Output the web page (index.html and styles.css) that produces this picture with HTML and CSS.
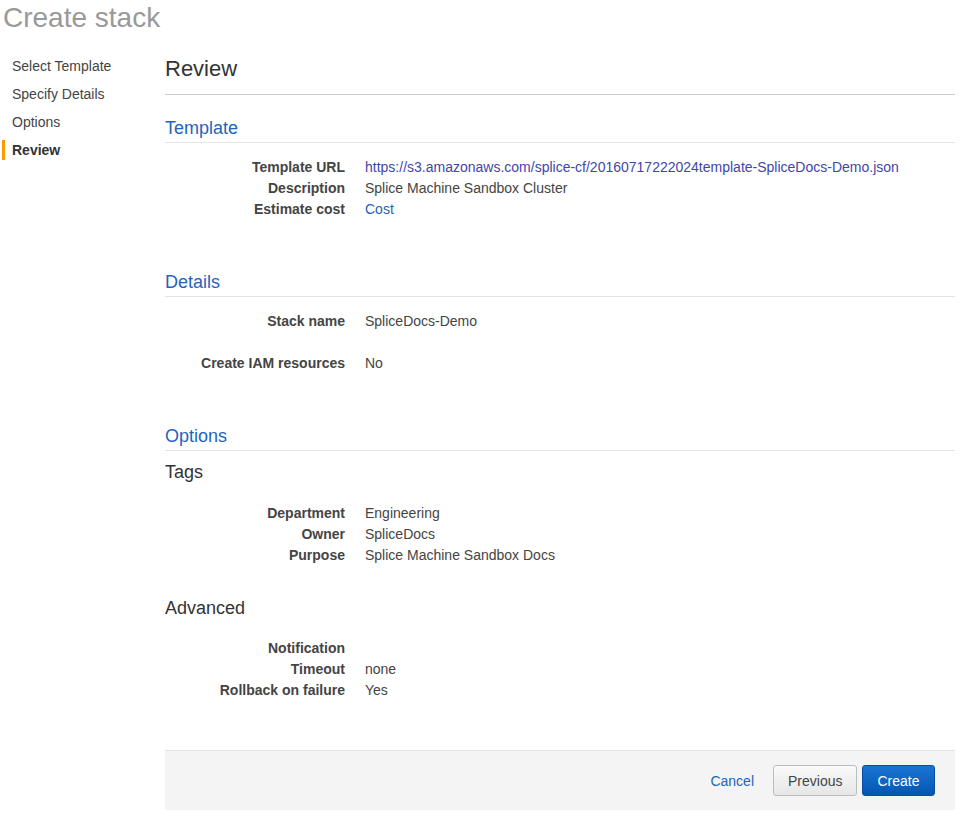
FILE: index.html
```html
<!DOCTYPE html>
<html lang="en">
<head>
<meta charset="utf-8">
<title>Create stack</title>
<link rel="stylesheet" href="styles.css">
</head>
<body>
<h1 class="page-title">Create stack</h1>
<div class="layout">
  <nav class="steps">
    <div class="step">Select Template</div>
    <div class="step">Specify Details</div>
    <div class="step">Options</div>
    <div class="step active">Review</div>
  </nav>
  <main class="main">
    <h2 class="review-title">Review</h2>

    <section class="section">
      <h3 class="section-title">Template</h3>
      <dl class="rows">
        <dt>Template URL</dt><dd><a class="visited" href="#">https://s3.amazonaws.com/splice-cf/20160717222024template-SpliceDocs-Demo.json</a></dd>
        <dt>Description</dt><dd>Splice Machine Sandbox Cluster</dd>
        <dt>Estimate cost</dt><dd><a href="#">Cost</a></dd>
      </dl>
    </section>

    <section class="section">
      <h3 class="section-title">Details</h3>
      <dl class="rows">
        <dt>Stack name</dt><dd>SpliceDocs-Demo</dd>
      </dl>
      <dl class="rows spaced">
        <dt>Create IAM resources</dt><dd>No</dd>
      </dl>
    </section>

    <section class="section">
      <h3 class="section-title">Options</h3>
      <h4 class="sub-title">Tags</h4>
      <dl class="rows sub-rows">
        <dt>Department</dt><dd>Engineering</dd>
        <dt>Owner</dt><dd>SpliceDocs</dd>
        <dt>Purpose</dt><dd>Splice Machine Sandbox Docs</dd>
      </dl>
      <h4 class="sub-title advanced">Advanced</h4>
      <dl class="rows sub-rows advanced-rows">
        <dt>Notification</dt><dd></dd>
        <dt>Timeout</dt><dd>none</dd>
        <dt>Rollback on failure</dt><dd>Yes</dd>
      </dl>
    </section>

    <div class="footer">
      <a class="cancel" href="#">Cancel</a>
      <button class="btn btn-secondary" type="button">Previous</button>
      <button class="btn btn-primary" type="button">Create</button>
    </div>
  </main>
</div>
</body>
</html>
```

FILE: styles.css
```css
* {
  box-sizing: border-box;
}

html, body {
  margin: 0;
  padding: 0;
  background: #ffffff;
}

body {
  font-family: "Liberation Sans", Arial, sans-serif;
  font-size: 14px;
  color: #444444;
}

.page-title {
  margin: 0;
  padding-left: 3px;
  font-size: 28px;
  line-height: 36px;
  font-weight: normal;
  color: #999999;
}

.layout {
  display: flex;
}

.steps {
  width: 165px;
  flex: none;
  display: flex;
  flex-direction: column;
  gap: 8px;
  padding-top: 20px;
}

.step {
  margin-left: 2px;
  line-height: 20px;
  color: #444444;
  border-left: 3px solid transparent;
  padding-left: 7px;
}

.step.active {
  border-left-color: #ff9900;
  font-weight: bold;
  color: #333333;
}

.main {
  flex: 1;
  padding-top: 20px;
  padding-right: 6px;
}

.review-title {
  margin: 0;
  font-size: 22px;
  line-height: 26px;
  font-weight: normal;
  color: #333333;
  padding-bottom: 12px;
  border-bottom: 1px solid #cccccc;
}

.section {
  margin-top: 22px;
}

.section + .section {
  margin-top: 51px;
}

.section-title {
  margin: 0;
  font-size: 18px;
  line-height: 22px;
  font-weight: normal;
  color: #1f64bd;
  padding-bottom: 3px;
  border-bottom: 1px solid #e4e4e4;
}

.rows {
  display: grid;
  grid-template-columns: 180px 1fr;
  column-gap: 20px;
  margin: 14px 0 0;
  line-height: 21px;
}

.rows.spaced {
  margin-top: 21px;
}

.rows dt {
  text-align: right;
  font-weight: bold;
  color: #444444;
}

.rows dd {
  margin: 0;
  color: #444444;
  min-height: 21px;
}

.rows a {
  color: #1f5fb8;
  text-decoration: none;
}

.rows a.visited {
  color: #3f46aa;
}

.sub-title {
  margin: 10px 0 0;
  font-size: 18px;
  line-height: 22px;
  font-weight: normal;
  color: #333333;
}

.sub-title.advanced {
  margin-top: 31px;
}

.sub-rows {
  margin-top: 20px;
}

.sub-rows.advanced-rows {
  margin-top: 19px;
}

.footer {
  margin-top: 49px;
  height: 60px;
  display: flex;
  align-items: center;
  justify-content: flex-end;
  gap: 5px;
  padding-right: 20px;
  background: #f4f4f4;
  border-top: 1px solid #e3e3e3;
}

.cancel {
  color: #2166b8;
  text-decoration: none;
  margin-right: 14px;
}

.btn {
  font-family: "Liberation Sans", Arial, sans-serif;
  font-size: 14px;
  height: 31px;
  border-radius: 3px;
  padding: 0 14px;
  cursor: pointer;
}

.btn-secondary {
  width: 84px;
  color: #444444;
  background: linear-gradient(#fafafa, #e6e6e6);
  border: 1px solid #bdbdbd;
}

.btn-primary {
  width: 73px;
  color: #ffffff;
  background: linear-gradient(#1a74d4, #0457b0);
  border: 1px solid #0a4f9e;
}
```
